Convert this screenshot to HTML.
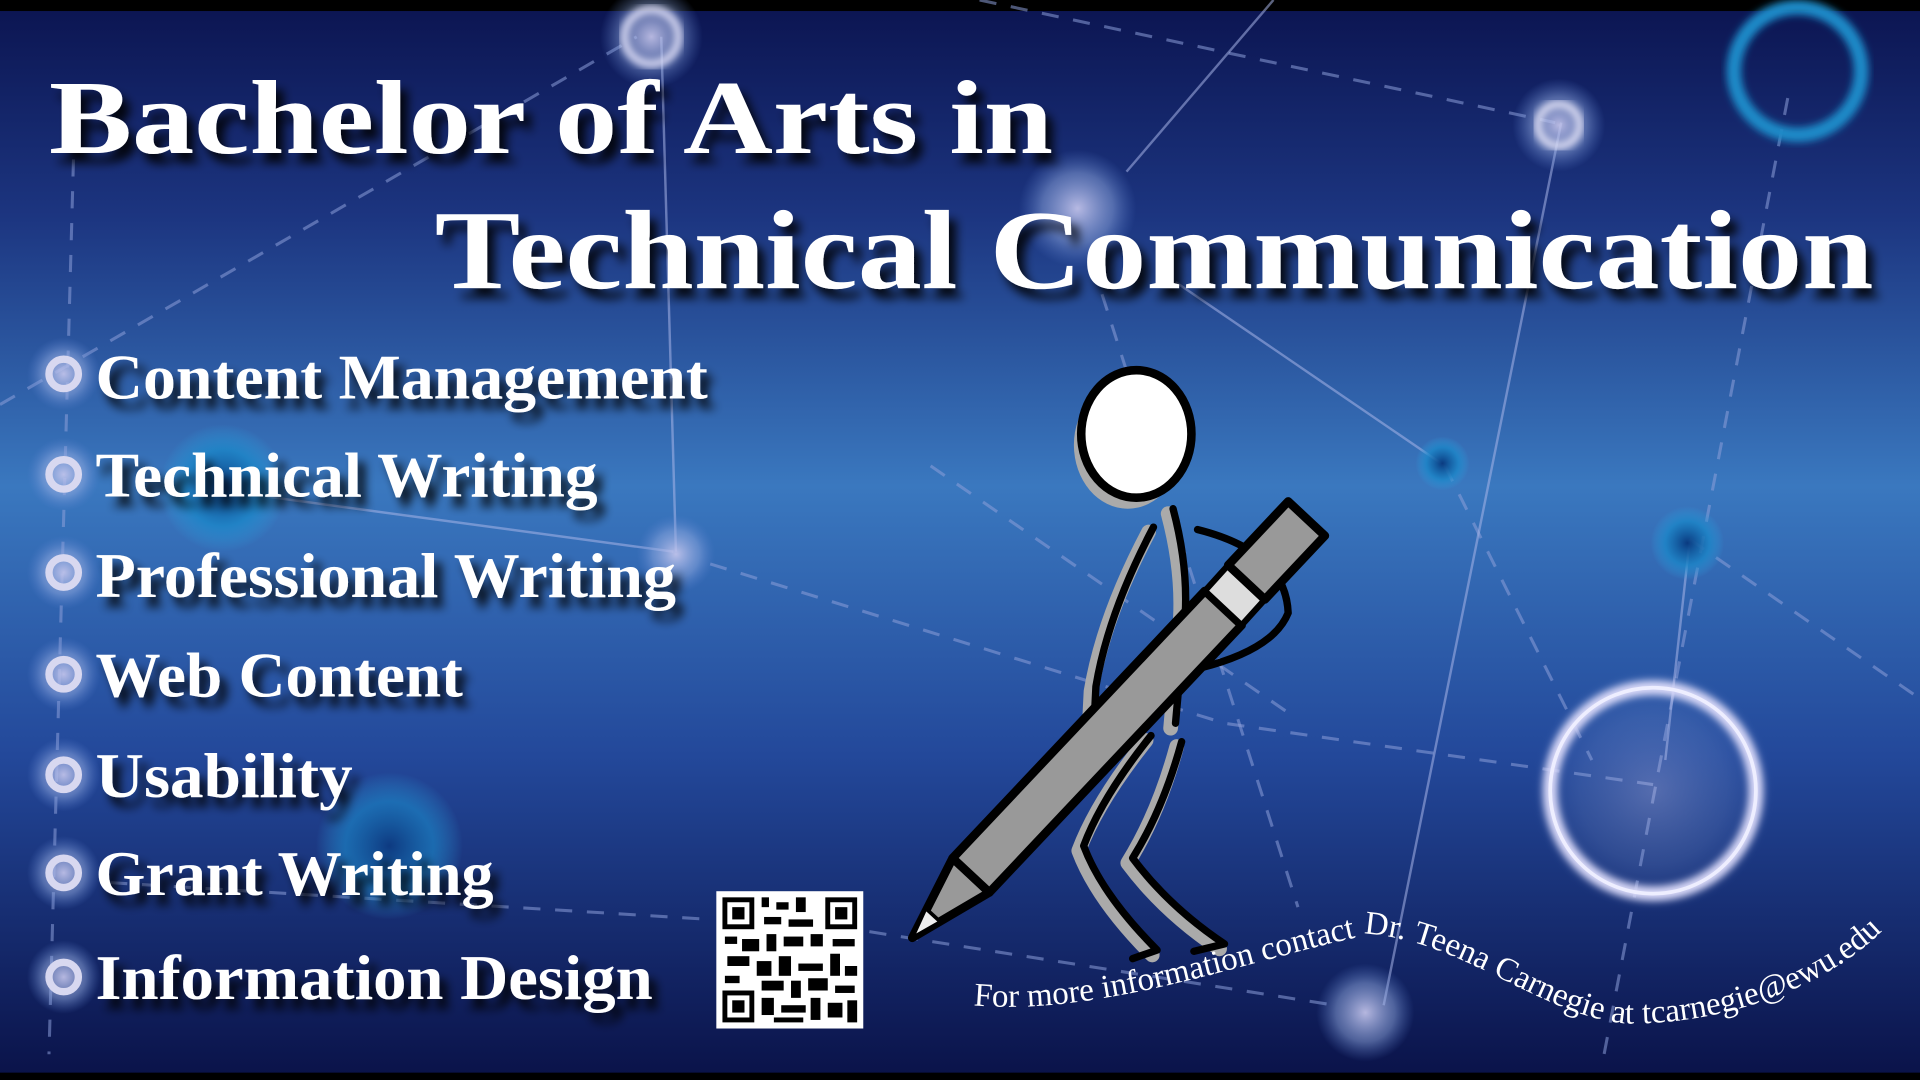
<!DOCTYPE html>
<html><head><meta charset="utf-8"><style>
html,body{margin:0;padding:0;background:#000;}
svg{display:block;}
</style></head><body>
<svg width="1920" height="1080" viewBox="0 0 1568 881" preserveAspectRatio="none" xmlns="http://www.w3.org/2000/svg">
<defs>
<linearGradient id="bg" x1="0" y1="0" x2="0" y2="1">
<stop offset="0" stop-color="#0b1450"/>
<stop offset="0.2" stop-color="#1c3580"/>
<stop offset="0.45" stop-color="#3a78bf"/>
<stop offset="0.7" stop-color="#23489a"/>
<stop offset="1" stop-color="#0a1248"/>
</linearGradient>
<filter id="sh" x="-10%" y="-30%" width="130%" height="180%"><feGaussianBlur in="SourceAlpha" stdDeviation="4"/><feOffset dx="6" dy="8"/><feComponentTransfer><feFuncA type="linear" slope="0.85"/></feComponentTransfer><feMerge><feMergeNode/><feMergeNode in="SourceGraphic"/></feMerge></filter>
<filter id="bl2"><feGaussianBlur stdDeviation="3"/></filter>
<radialGradient id="gd" cx="0.5" cy="0.5" r="0.5"><stop offset="0" stop-color="#c8c8ee" stop-opacity="0.9"/><stop offset="0.6" stop-color="#8fa8e0" stop-opacity="0.5"/><stop offset="1" stop-color="#5a80d0" stop-opacity="0"/></radialGradient>
<radialGradient id="gb" cx="0.5" cy="0.5" r="0.5"><stop offset="0" stop-color="#0a3a80"/><stop offset="0.6" stop-color="#1b86c8" stop-opacity="0.8"/><stop offset="1" stop-color="#30a0e0" stop-opacity="0"/></radialGradient>
</defs>
<rect width="1568" height="881" fill="url(#bg)"/>
<rect width="1568" height="9" fill="#000"/>
<rect y="875" width="1568" height="6" fill="#000"/>
<g stroke="#8c9fd8" stroke-opacity="0.55" stroke-width="2.5" fill="none" stroke-dasharray="14 12">
<path d="M0 330 L520 30"/><path d="M800 0 L1270 100"/><path d="M580 460 L1000 590 L1350 640"/>
<path d="M760 380 L1050 580"/><path d="M1380 440 L1568 570"/><path d="M900 240 L1060 740"/>
<path d="M1460 80 L1310 860"/><path d="M1180 380 L1300 620"/><path d="M90 720 L580 750"/><path d="M60 130 L40 860"/><path d="M710 760 L1090 820"/>
</g>
<g stroke="#a8b4e8" stroke-opacity="0.55" stroke-width="2" fill="none">
<path d="M540 30 L552 450"/><path d="M920 140 L1040 0"/><path d="M960 230 L1180 380"/><path d="M1275 100 L1130 820"/><path d="M1380 440 L1360 620"/><path d="M180 400 L550 450"/>
</g>
<circle cx="532" cy="30" r="42" fill="url(#gd)"/><circle cx="532" cy="30" r="22" fill="none" stroke="#dcdcf5" stroke-width="6" filter="url(#bl2)"/>
<circle cx="1468" cy="58" r="52" fill="none" stroke="#1a8ac8" stroke-width="12" filter="url(#bl2)"/>
<circle cx="1273" cy="102" r="38" fill="url(#gd)"/><circle cx="1273" cy="102" r="17" fill="none" stroke="#e0e0f5" stroke-width="6" filter="url(#bl2)"/>
<circle cx="880" cy="170" r="48" fill="url(#gd)"/>
<circle cx="1178" cy="378" r="22" fill="url(#gb)"/>
<circle cx="1378" cy="443" r="30" fill="url(#gb)"/>
<circle cx="552" cy="452" r="32" fill="url(#gd)"/>
<circle cx="182" cy="398" r="52" fill="url(#gb)"/>
<circle cx="318" cy="690" r="60" fill="url(#gb)" opacity="0.8"/>
<circle cx="1115" cy="826" r="40" fill="url(#gd)"/>
<circle cx="1350" cy="645" r="100" fill="url(#gd)" opacity="0.35"/>
<circle cx="1350" cy="645" r="84" fill="none" stroke="#d8d8f8" stroke-width="12" filter="url(#bl2)"/>
<circle cx="1350" cy="645" r="84" fill="none" stroke="#eeeeff" stroke-width="3"/>
<g transform="translate(52,0)">
<g fill="url(#gd)"><circle cy="305" r="30"/><circle cy="387" r="30"/><circle cy="467" r="30"/><circle cy="550" r="30"/><circle cy="632" r="30"/><circle cy="712" r="30"/><circle cy="797" r="30"/></g>
<g fill="none" stroke="#d8d8f0" stroke-width="6"><circle cy="305" r="12"/><circle cy="387" r="12"/><circle cy="467" r="12"/><circle cy="550" r="12"/><circle cy="632" r="12"/><circle cy="712" r="12"/><circle cy="797" r="12"/></g>
</g>
<g font-family="Liberation Serif, serif" font-weight="bold" fill="#fff" filter="url(#sh)">
<text x="40" y="125" font-size="86" textLength="820" lengthAdjust="spacingAndGlyphs">Bachelor of Arts in</text>
<text x="355" y="235" font-size="92" textLength="1175" lengthAdjust="spacingAndGlyphs">Technical Communication</text>
<g font-size="52">
<text x="78" y="325" textLength="500" lengthAdjust="spacingAndGlyphs">Content Management</text>
<text x="78" y="405" textLength="410" lengthAdjust="spacingAndGlyphs">Technical Writing</text>
<text x="78" y="487" textLength="474" lengthAdjust="spacingAndGlyphs">Professional Writing</text>
<text x="78" y="568" textLength="300" lengthAdjust="spacingAndGlyphs">Web Content</text>
<text x="78" y="650" textLength="210" lengthAdjust="spacingAndGlyphs">Usability</text>
<text x="78" y="730" textLength="325" lengthAdjust="spacingAndGlyphs">Grant Writing</text>
<text x="78" y="815" textLength="455" lengthAdjust="spacingAndGlyphs">Information Design</text>
</g>
</g>
<rect x="585" y="727" width="120" height="112" fill="#fff"/>
<g fill="#000">
<rect x="590" y="732" width="26" height="26"/><rect x="594" y="736" width="18" height="18" fill="#fff"/><rect x="598" y="740" width="10" height="10"/>
<rect x="674" y="732" width="26" height="26"/><rect x="678" y="736" width="18" height="18" fill="#fff"/><rect x="682" y="740" width="10" height="10"/>
<rect x="590" y="808" width="26" height="26"/><rect x="594" y="812" width="18" height="18" fill="#fff"/><rect x="598" y="816" width="10" height="10"/>
<rect x="622" y="732" width="6" height="8"/><rect x="634" y="736" width="10" height="6"/><rect x="650" y="732" width="8" height="12"/><rect x="624" y="748" width="14" height="6"/><rect x="644" y="750" width="20" height="6"/>
<rect x="592" y="764" width="10" height="6"/><rect x="606" y="766" width="14" height="10"/><rect x="626" y="762" width="8" height="14"/><rect x="640" y="764" width="16" height="8"/><rect x="662" y="762" width="10" height="10"/><rect x="680" y="766" width="18" height="6"/>
<rect x="594" y="780" width="18" height="8"/><rect x="618" y="784" width="12" height="12"/><rect x="636" y="780" width="10" height="16"/><rect x="652" y="786" width="20" height="6"/><rect x="678" y="778" width="8" height="18"/><rect x="690" y="788" width="10" height="8"/>
<rect x="592" y="796" width="12" height="6"/><rect x="622" y="800" width="18" height="8"/><rect x="646" y="800" width="8" height="14"/><rect x="660" y="798" width="16" height="10"/><rect x="682" y="804" width="16" height="6"/>
<rect x="622" y="814" width="10" height="14"/><rect x="638" y="820" width="20" height="6"/><rect x="662" y="814" width="8" height="18"/><rect x="676" y="818" width="12" height="12"/><rect x="692" y="816" width="8" height="18"/><rect x="632" y="830" width="24" height="4"/>
</g>
<g fill="none" stroke-linecap="round" stroke-linejoin="round">
<g stroke="#aaa" stroke-width="12" transform="translate(-4,4)">
<path d="M942 430 Q905 500 895 560 L893 600"/><path d="M958 415 Q970 460 968 500 L960 590"/>
<path d="M940 600 Q900 650 885 690 Q900 730 945 775"/><path d="M965 605 Q950 660 925 700 Q955 740 1000 770"/>
</g>
<g stroke="#000" stroke-width="6">
<path d="M942 430 Q905 500 895 560 L893 600"/><path d="M958 415 Q970 460 968 500 L960 590"/>
<path d="M940 600 Q900 650 885 690 Q900 730 945 775 L925 782"/><path d="M965 605 Q950 660 925 700 Q955 740 1000 770 L975 776"/>
<path d="M978 432 Q1050 450 1052 500 Q1040 530 980 545 L950 548"/>
</g>
<ellipse cx="925" cy="358" rx="44" ry="52" fill="#aaa" stroke="none" transform="translate(-4,5)"/>
<ellipse cx="928" cy="354" rx="45" ry="52" fill="#fff" stroke="#000" stroke-width="7"/>
</g>
<g stroke="#000" stroke-linejoin="round">
<polygon points="745,765 808,728 778,700" fill="#999" stroke-width="7"/>
<polygon points="745,765 768,752 756,741" fill="#eee" stroke-width="3"/>
<polygon points="778,700 984,482 1014,510 808,728" fill="#999" stroke-width="7"/>
<polygon points="984,482 1003,461 1033,489 1014,510" fill="#ddd" stroke-width="5"/>
<polygon points="1003,461 1052,409 1082,437 1033,489" fill="#999" stroke-width="7"/>
</g>
<path id="cp" d="M795 820 C900 830 1030 780 1120 762 C1200 770 1260 830 1330 835 C1430 835 1520 790 1555 738" fill="none"/>
<text font-family="Liberation Serif, serif" font-size="27" fill="#fff"><textPath href="#cp">For more information contact Dr. Teena Carnegie at tcarnegie@ewu.edu</textPath></text>
</svg>
</body></html>
